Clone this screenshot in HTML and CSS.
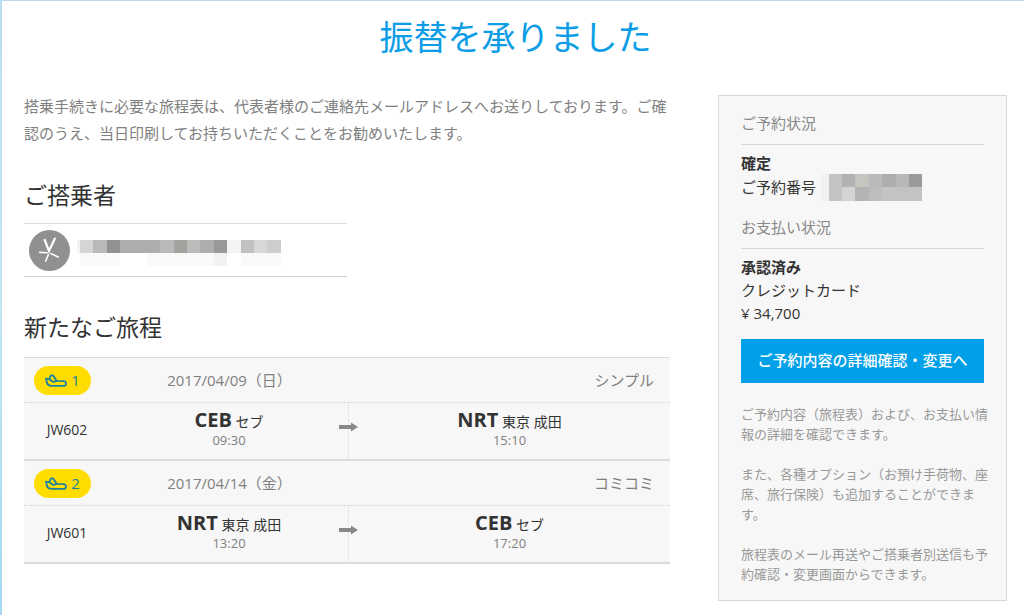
FILE: index.html
```
<!DOCTYPE html>
<html lang="ja">
<head>
    <meta charset="UTF-8">
    <title>振替を承りました</title>
    <link rel="stylesheet" href="styles.css">
</head>
<body>
<!-- 共通アイコン -->
<svg class="defs" aria-hidden="true">
    <symbol id="plane" viewBox="0 0 22 13">
        <path d="M1 4.6 L4.2 5.2 L6 1.4 L8.2 1.4 L11.6 6.8 L19.2 7.2 Q21 7.6 21 9.6 Q21 11.8 19 11.9 L6.4 11.9 Q2.8 11.7 1.8 8.6 Z"/>
        <path d="M4.2 5.2 L8.4 8 L11.6 6.8"/>
    </symbol>
    <symbol id="arrow" viewBox="0 0 19 10">
        <path d="M0 3 H12 V0.4 L19 5 L12 9.6 V7 H0 Z"/>
    </symbol>
</svg>
<div class="page">
    <h1>振替を承りました</h1>
    <div class="content">
        <main class="main">
            <p class="lead">搭乗手続きに必要な旅程表は、代表者様のご連絡先メールアドレスへお送りしております。ご確認のうえ、当日印刷してお持ちいただくことをお勧めいたします。</p>

            <h2>ご搭乗者</h2>
            <div class="passenger">
                <svg class="avatar" viewBox="0 0 41 41" aria-hidden="true">
                    <circle cx="20.5" cy="20.5" r="20.5"/>
                    <path class="bold" d="M15.7 10 L20 21 L25.8 8.6"/>
                    <path d="M10.8 22.4 L18.2 22.8 M21.8 23.6 L29.2 27 M19.4 24.6 L16.6 31"/>
                </svg>
                <!-- 名前は伏せる -->
                <svg class="mask-name" viewBox="0 0 204 27" role="img" aria-label="搭乗者名">
                    <path fill="#f3f3f2" d="M0 0h3v13H0z"/>
                    <path fill="#d5d5d5" d="M3 0h13v13H3z"/>
                    <path fill="#b9b9b8" d="M16 0h14v13H16z"/>
                    <path fill="#929292" d="M30 0h13v13H30z"/>
                    <path fill="#adadab" d="M43 0h40v13H43z"/>
                    <path fill="#b9b9b9" d="M83 0h14v13H83z"/>
                    <path fill="#a2a29f" d="M97 0h13v13H97z"/>
                    <path fill="#bcbcba" d="M110 0h13v13h-13z"/>
                    <path fill="#adaead" d="M123 0h14v13h-14z"/>
                    <path fill="#999" d="M137 0h13v13h-13z"/>
                    <path fill="#f4f4f4" d="M150 0h14v13h-14z"/>
                    <path fill="#c1c1c1" d="M164 0h13v13h-13z"/>
                    <path fill="#d7d7d7" d="M177 0h13v13h-13z"/>
                    <path fill="#cdcdcd" d="M190 0h14v13h-14z"/>
                    <path fill="#f9f9f9" d="M3 13h40v13H3zM70 13h67v13H70zM164 13h40v13h-40z"/>
                    <path fill="#f1f1f1" d="M137 13h13v13h-13z"/>
                </svg>
            </div>

            <h2>新たなご旅程</h2>
            <table class="trip">
                <colgroup>
                    <col class="col-no">
                    <col class="col-from">
                    <col>
                </colgroup>
                <tbody>
                <tr class="head">
                    <td><span class="badge"><svg><use href="#plane"/></svg>1</span></td>
                    <td>2017/04/09（日）</td>
                    <td class="plan">シンプル</td>
                </tr>
                <tr class="flight">
                    <td>JW602</td>
                    <td class="from">
                        <div class="place"><b>CEB</b> セブ</div>
                        <div class="time">09:30</div>
                        <svg class="arrow"><use href="#arrow"/></svg>
                    </td>
                    <td>
                        <div class="place"><b>NRT</b> 東京 成田</div>
                        <div class="time">15:10</div>
                    </td>
                </tr>
                </tbody>
                <tbody>
                <tr class="head">
                    <td><span class="badge"><svg><use href="#plane"/></svg>2</span></td>
                    <td>2017/04/14（金）</td>
                    <td class="plan">コミコミ</td>
                </tr>
                <tr class="flight">
                    <td>JW601</td>
                    <td class="from">
                        <div class="place"><b>NRT</b> 東京 成田</div>
                        <div class="time">13:20</div>
                        <svg class="arrow"><use href="#arrow"/></svg>
                    </td>
                    <td>
                        <div class="place"><b>CEB</b> セブ</div>
                        <div class="time">17:20</div>
                    </td>
                </tr>
                </tbody>
            </table>
        </main>

        <aside class="side">
            <h3>ご予約状況</h3>
            <p class="status">確定</p>
            <p class="booking">ご予約番号
                <svg class="mask-no" viewBox="0 0 101 27" role="img" aria-label="予約番号">
                    <path fill="#f1f1f1" d="M0 0h8v27H0z"/>
                    <path fill="#c5c3c3" d="M8 0h13v27H8z"/>
                    <path fill="#b2b2b2" d="M21 0h13v13H21z"/>
                    <path fill="#c5c6c0" d="M34 0h14v13H34z"/>
                    <path fill="#b9babb" d="M48 0h13v13H48z"/>
                    <path fill="#aeaeaf" d="M61 0h14v13H61z"/>
                    <path fill="#b6b8ba" d="M75 0h13v13H75z"/>
                    <path fill="#9a9a9b" d="M88 0h13v13H88z"/>
                    <path fill="#d3d3d3" d="M21 13h13v14H21z"/>
                    <path fill="#b4b4b4" d="M34 13h14v14H34z"/>
                    <path fill="#bdbdbd" d="M48 13h13v14H48z"/>
                    <path fill="#c3c3c3" d="M61 13h40v14H61z"/>
                </svg>
            </p>
            <h3>お支払い状況</h3>
            <p class="status">承認済み</p>
            <p>クレジットカード</p>
            <p>¥ 34,700</p>
            <button type="button" class="btn">ご予約内容の詳細確認・変更へ</button>
            <div class="note">
                <p>ご予約内容（旅程表）および、お支払い情報の詳細を確認できます。</p>
                <p>また、各種オプション（お預け手荷物、座席、旅行保険）も追加することができます。</p>
                <p>旅程表のメール再送やご搭乗者別送信も予約確認・変更画面からできます。</p>
            </div>
        </aside>
    </div>
</div>
</body>
</html>
```
FILE: styles.css
```
* {
    margin: 0;
    padding: 0;
    box-sizing: border-box;
}

body {
    font: 15px/23px "Open Sans", "Noto Sans CJK JP", sans-serif;
    color: #333;
    background: linear-gradient(#b9def2, #bfe7f2 50%, #a5d8f4);
}

.defs {
    display: none;
}

.page {
    min-height: 100vh;
    border-top: 1px solid #b9d9ee;
    margin-left: 2px;
    padding: 11px 17px 14px 22px;
    background-color: #fff;
}

h1 {
    font-size: 34px;
    line-height: 50px;
    font-weight: normal;
    text-align: center;
    color: #0c9de6;
}

h2 {
    font-size: 23px;
    line-height: 32px;
    font-weight: normal;
}

.content {
    display: flex;
    align-items: flex-start;
    gap: 48px;
    margin-top: 33px;
}

.main {
    flex: 1;
}

.lead {
    line-height: 27px;
    margin: -2px 0 32px;
    color: #808080;
}

/* 搭乗者 */
.passenger {
    display: flex;
    align-items: center;
    width: 50%;
    height: 54px;
    margin: 12px 0 34px;
    padding-left: 5px;
    border-top: 1px solid #dcdcdc;
    border-bottom: 1px solid #d2d2d2;
}

.avatar {
    width: 41px;
    height: 41px;
    margin-right: 7px;
    fill: #92908f;
}

.avatar path {
    fill: none;
    stroke: #fff;
    stroke-width: 1.6;
    stroke-linecap: round;
}

.avatar .bold {
    stroke-width: 2.2;
}

.mask-name {
    width: 204px;
    height: 27px;
    margin-top: 6px;
}

/* 旅程 */
.trip {
    width: 100%;
    margin-top: 14px;
    table-layout: fixed;
    border-collapse: separate;
    border-spacing: 0;
    border-top: 1px solid #dcdcdc;
    background-color: #f7f7f7;
    text-align: center;
}

.col-no {
    width: 86px;
}

.col-from {
    width: 37%;
}

.head td {
    height: 45px;
    border-bottom: 1px dotted #d2d2d2;
    color: #808080;
}

.head .plan {
    padding-right: 16px;
    text-align: right;
}

.flight td {
    height: 58px;
    padding-bottom: 4px;
    font-size: 14px;
    border-bottom: 2px solid #dcdcdc;
}

.flight .from {
    position: relative;
    border-right: 1px solid #e8e8e8;
}

.badge {
    display: flex;
    align-items: center;
    justify-content: center;
    gap: 4px;
    width: 57px;
    height: 29px;
    margin-left: 10px;
    border-radius: 15px;
    background-color: #fd0;
    color: #1a82a0;
}

.badge svg {
    width: 22px;
    height: 13px;
    fill: none;
    stroke: #1a82a0;
    stroke-width: 1.8;
    stroke-linejoin: round;
}

.place {
    line-height: 20px;
}

.place b {
    font-size: 20px;
}

.time {
    font-size: 13px;
    line-height: 16px;
    color: #808080;
}

.arrow {
    position: absolute;
    top: 19px;
    right: -10px;
    width: 19px;
    height: 10px;
    fill: #888;
}

/* 予約状況 */
.side {
    width: 289px;
    padding: 16px 22px;
    border: 1px solid #d8d8d8;
    background-color: #f7f7f7;
}

.side h3 {
    margin-bottom: 7px;
    padding-bottom: 9px;
    border-bottom: 1px solid #d8d8d8;
    font-size: 15px;
    line-height: 23px;
    font-weight: normal;
    color: #888;
}

.status {
    font-weight: bold;
}

.booking {
    display: flex;
    align-items: center;
    gap: 5px;
    height: 27px;
    margin: -1px 0 15px;
}

.mask-no {
    width: 101px;
    height: 27px;
}

.btn {
    display: block;
    width: 100%;
    height: 44px;
    margin: 14px 0 21px;
    padding-bottom: 2px;
    border: none;
    background-color: #00a0e9;
    color: #fff;
    font: inherit;
    font-weight: 500;
    cursor: pointer;
}

.note {
    margin-right: -4px;
    font-size: 13px;
    line-height: 20px;
    color: #999;
}

.note p + p {
    margin-top: 20px;
}
```
